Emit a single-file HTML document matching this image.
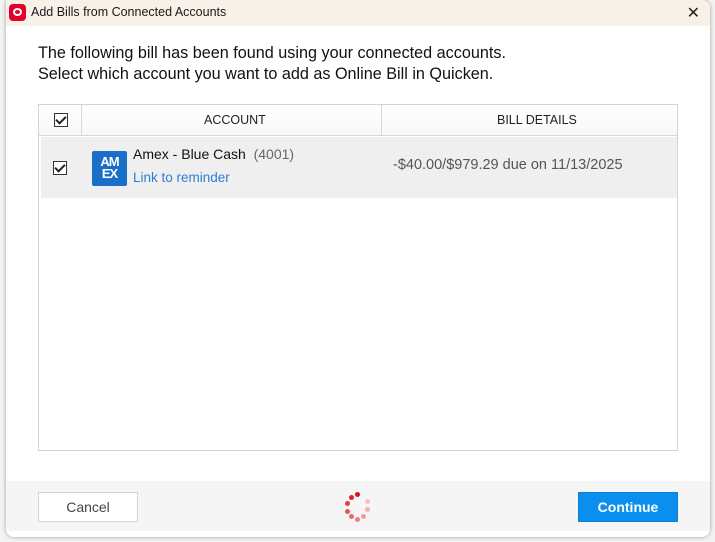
<!DOCTYPE html>
<html><head><meta charset="utf-8"><style>
*{box-sizing:border-box;margin:0;padding:0}
body{width:715px;height:542px;overflow:hidden;background:#d9d9d9;font-family:"Segoe UI","Liberation Sans",sans-serif;position:relative}
.bg{position:absolute;left:0;top:0;width:715px;height:542px;background:#f3f3f3}
.dlg{position:absolute;left:6px;top:0;width:704px;height:537px;background:#fff;border-radius:0 8px 8px 8px;box-shadow:0 0 4px rgba(0,0,0,.35);overflow:hidden}
.title{height:26px;background:#f7f1e8;position:relative;font-size:12.5px;color:#1a1a1a}
.title .logo{position:absolute;left:3px;top:4px;width:17px;height:17px;background:#e4002b;border-radius:4px}
.title .logo:after{content:"";position:absolute;left:4px;top:4px;width:9px;height:8px;border:2px solid #fff;border-radius:50%;box-sizing:border-box}
.title span{position:absolute;left:25px;top:5px}
.title .x{position:absolute;right:10px;top:3px;font-size:16px;color:#222}
.intro{position:absolute;left:32px;top:43px;font-size:16.2px;line-height:21px;color:#111}
.tbl{position:absolute;left:32px;top:104px;width:640px;height:347px;border:1px solid #d4d4d4;background:#fff}
.hdr{height:31px;border-bottom:1px solid #d8d8d8;background:linear-gradient(#fff,#f7f8fa);position:relative;font-size:12.5px;color:#222}
.vd{position:absolute;top:0;height:30px;width:1px;background:#d8d8d8}
.cb{position:absolute;width:14px;height:14px;border:1px solid #333;background:#fff}
.cb:after{content:"";position:absolute;left:3px;top:0px;width:4px;height:8px;border:solid #222;border-width:0 2px 2px 0;transform:rotate(45deg)}
.row{position:absolute;left:2px;top:32px;width:636px;height:61px;background:#efefef}
.amex{position:absolute;left:51px;top:14px;width:35px;height:35px;background:#1a70c9;border-radius:2px;color:#fff;font:bold 13px/12px "Liberation Sans",sans-serif;text-align:center;padding-top:5px;letter-spacing:-1px}
.foot{position:absolute;left:0;top:481px;width:704px;height:50px;background:#f5f5f5}
.btn{position:absolute;top:11px;height:30px;width:100px;font-size:14px;text-align:center;line-height:28px}
.dot{position:absolute;width:5px;height:5px;border-radius:50%}
</style></head><body>
<div class="bg"></div>
<div class="dlg">
 <div class="title"><div class="logo"></div><span>Add Bills from Connected Accounts</span><div class="x">✕</div></div>
 <div class="intro">The following bill has been found using your connected accounts.<br>Select which account you want to add as Online Bill in Quicken.</div>
 <div class="tbl">
  <div class="hdr">
   <div class="cb" style="left:15px;top:8px"></div>
   <div class="vd" style="left:42px"></div>
   <div style="position:absolute;left:165px;top:8px">ACCOUNT</div>
   <div class="vd" style="left:342px"></div>
   <div style="position:absolute;left:458px;top:8px">BILL DETAILS</div>
  </div>
  <div class="row">
   <div class="cb" style="left:12px;top:24px"></div>
   <div class="amex">AM<br>EX</div>
   <div style="position:absolute;left:92px;top:9px;font-size:14px;color:#111">Amex - Blue Cash&nbsp;&nbsp;<span style="color:#666">(4001)</span></div>
   <div style="position:absolute;left:92px;top:33px;font-size:13.5px;color:#2a7fd4">Link to reminder</div>
   <div style="position:absolute;left:352px;top:20px;font-size:14.5px;color:#555">-$40.00/$979.29 due on 11/13/2025</div>
  </div>
 </div>
 <div class="foot">
  <div class="btn" style="left:32px;background:#fff;border:1px solid #d4d4d4;color:#444">Cancel</div>
  <div class="btn" style="left:572px;background:#0a8fef;border:1px solid #0a7fd8;color:#fff;font-weight:bold">Continue</div>
  <div class="dot" style="left:349px;top:11px;background:#d9141f"></div>
  <div class="dot" style="left:343px;top:14px;background:#dc2530"></div>
  <div class="dot" style="left:339px;top:20px;background:#e03f49"></div>
  <div class="dot" style="left:339px;top:28px;background:#e4555e"></div>
  <div class="dot" style="left:343px;top:33px;background:#e86a72"></div>
  <div class="dot" style="left:349px;top:36px;background:#ec8088"></div>
  <div class="dot" style="left:355px;top:33px;background:#f0989e"></div>
  <div class="dot" style="left:359px;top:26px;background:#f4b0b5"></div>
  <div class="dot" style="left:359px;top:18px;background:#f6c2c6"></div>
 </div>
</div>
</body></html>
